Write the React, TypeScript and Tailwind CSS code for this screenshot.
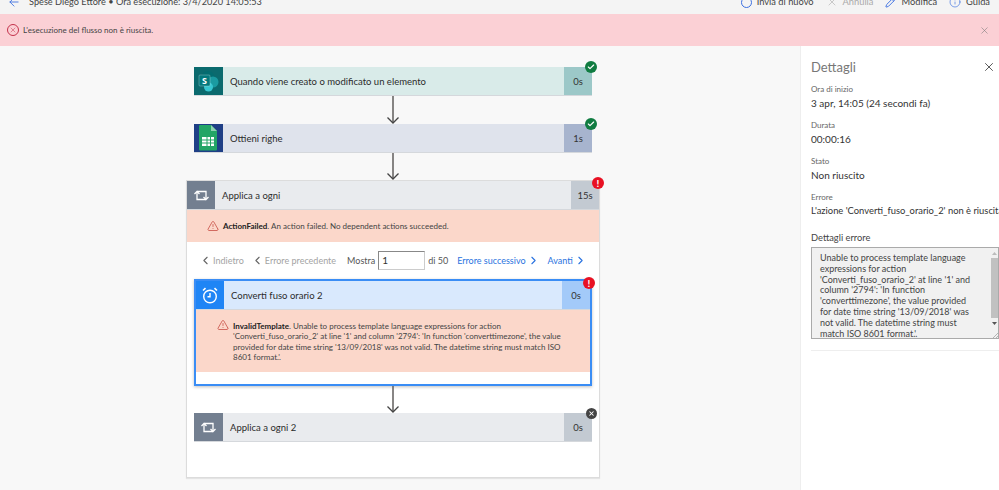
import React from 'react';
import { ArrowLeft, X, Pencil, Info, ChevronLeft, ChevronRight, AlertTriangle, Check } from 'lucide-react';

const SharePointIcon = () => (
  <svg width="22" height="22" viewBox="0 0 22 22">
    <circle cx="10" cy="7.5" r="6.5" fill="#036c70" />
    <circle cx="15" cy="12" r="5.5" fill="#1a9ba1" />
    <circle cx="10.5" cy="17" r="4.5" fill="#37c6d0" />
    <rect x="1" y="5" width="11" height="11" rx="1" fill="#03787c" stroke="#e5f3f3" strokeWidth="0.3" />
    <text x="6.5" y="13.5" textAnchor="middle" fontSize="9" fontWeight="700" fill="#fff" fontFamily="'Open Sans', sans-serif">S</text>
  </svg>
);

const SheetsIcon = () => (
  <svg width="19" height="26" viewBox="0 0 19 26">
    <path d="M1 0h11l6 6v18.5a1 1 0 0 1-1 1H1a1 1 0 0 1-1-1V1a1 1 0 0 1 1-1z" fill="#23a566" />
    <path d="M12 0l6 6h-6z" fill="#8ed1b1" />
    <path d="M3 12h12v9H3z" fill="#fff" />
    <path d="M3 15h12M3 18h12M8 12v9M11.500 12v9" stroke="#23a566" strokeWidth="1" />
  </svg>
);

// loop with a small arrow on each side, as on the "apply to each" tile
const LoopIcon = () => (
  <svg width="15" height="13" viewBox="0 0 15 13" fill="none" stroke="#fff" strokeWidth="1.300">
    <path d="M3 3v7.500h9" />
    <path d="M12 10V2.500H3" />
    <path d="M0.500 5L3 2.500L5.500 5" />
    <path d="M9.500 8L12 10.500L14.500 8" />
  </svg>
);

const ClockIcon = () => (
  <svg width="16" height="17" viewBox="0 0 16 17" fill="none" stroke="#fff" strokeWidth="1.400">
    <circle cx="8" cy="9.500" r="6.300" />
    <path d="M8 6v3.800H5.500" />
    <path d="M1 3.500L3.500 1.200M15 3.500L12.500 1.200" strokeWidth="1.600" />
  </svg>
);

const Arrow = ({ height }: { height: number }) => (
  <svg width="14" height={height} viewBox={`0 0 14 ${height}`} className="shrink-0">
    <path d={`M7 0V${height - 1}`} stroke="#605e5c" strokeWidth="1.5" />
    <path d={`M1.500 ${height - 6.5}L7 ${height - 1}L12.500 ${height - 6.5}`} stroke="#444" strokeWidth="1.300" fill="none" />
  </svg>
);

const OkBadge = () => (
  <span className="absolute -right-[5px] -top-[6px] flex h-[12px] w-[12px] items-center justify-center rounded-full bg-[#107c41] text-white">
    <Check size={8} strokeWidth={3.500} />
  </span>
);

const FailBadge = () => (
  <span className="absolute -right-[5px] -top-[4px] flex h-[12px] w-[12px] items-center justify-center rounded-full bg-[#e81123] text-[10px] leading-none font-bold text-white">
    !
  </span>
);

const Detail = ({ label, value, valueClass = 'text-[10px]' }: { label: string; value: string; valueClass?: string }) => (
  <div className="mb-[8px] whitespace-nowrap">
    <div className="text-[8px] leading-[14px] text-[#666]">{label}</div>
    <div className={`leading-[14px] text-[#333] ${valueClass}`}>{value}</div>
  </div>
);

const CardRow = ({ icon, iconBg, title, time, bg, timeBg, children }: {
  icon: React.ReactNode;
  iconBg: string;
  title: string;
  time: string;
  bg: string;
  timeBg: string;
  children?: React.ReactNode;
}) => (
  <div className={`relative flex h-[29px] w-full shrink-0 items-stretch border-b border-[#d5d8dc] ${bg}`}>
    <div className={`flex shrink-0 items-center justify-center ${iconBg}`}>{icon}</div>
    <div className="flex-1 truncate pl-[7px] text-[9.5px] leading-[29px] text-[#2b2b2b]">{title}</div>
    <div className={`w-[28px] shrink-0 text-center text-[9.5px] leading-[29px] text-[#333] ${timeBg}`}>{time}</div>
    {children}
  </div>
);

export default function App() {
  return (
    <div className="flex h-[490px] w-[999px] flex-col overflow-hidden bg-[#f8f8f8] font-['Lato',sans-serif]">
      <div className="flex h-[14px] shrink-0 items-start justify-between overflow-hidden bg-[#f4f4f4] leading-[14px] text-[#444]">
        <div className="-mt-[5px] flex items-center whitespace-nowrap pl-[7px] text-[9.2px]">
          <ArrowLeft size={14} className="text-[#3b6fe0]" strokeWidth={1.5} />
          <span className="ml-[8px]">Spese Diego Ettore • Ora esecuzione: 3/4/2020 14:05:53</span>
        </div>
        <div className="-mt-[5px] flex items-center gap-[12px] whitespace-nowrap pr-[9px] text-[9.3px]">
          <span className="flex items-center gap-[5px]"><span className="h-[11px] w-[11px] rounded-full border border-[#3b6fe0]" />Invia di nuovo</span>
          <span className="flex items-center gap-[5px] text-[#aaa]"><X size={12} strokeWidth={1.200} />Annulla</span>
          <span className="flex items-center gap-[5px]"><Pencil size={11} className="text-[#3b6fe0]" />Modifica</span>
          <span className="flex items-center gap-[5px]"><Info size={12} strokeWidth={1.300} className="text-[#3b6fe0]" />Guida</span>
        </div>
      </div>

      <div className="flex h-[32px] shrink-0 items-center bg-[#fbd0d5] pl-[7px] pr-[9px] text-[#444]">
        <span className="flex h-[12px] w-[12px] items-center justify-center rounded-full border border-[#c4314b] text-[#c4314b]">
          <X size={8} strokeWidth={1.500} />
        </span>
        <span className="ml-[4px] flex-1 text-[8px]">L'esecuzione del flusso non è riuscita.</span>
        <X size={11} strokeWidth={1.200} className="text-[#777]" />
      </div>

      <div className="flex min-h-0 flex-1">
        <main className="flex w-[800px] shrink-0 flex-col items-center pr-[14px] pt-[21px]">
          <div className="flex w-[398px] flex-col items-center">
            <CardRow title="Quando viene creato o modificato un elemento" time="0s" bg="bg-[#d9ebe9]" timeBg="bg-[#9cc8c8]" iconBg="w-[29px] bg-[#0b6a6e]" icon={<SharePointIcon />}>
              <OkBadge />
            </CardRow>
            <Arrow height={28} />
            <CardRow title="Ottieni righe" time="1s" bg="bg-[#dfe3ec]" timeBg="bg-[#a7b4ce]" iconBg="w-[29px] bg-[#1f3f86]" icon={<SheetsIcon />}>
              <OkBadge />
            </CardRow>
            <Arrow height={27} />
          </div>

          <div className="flex h-[298px] w-[414px] shrink-0 flex-col border border-[#dcdcdc] bg-white shadow-[0_1px_1px_rgba(0,0,0,0.08)]">
            <CardRow title="Applica a ogni" time="15s" bg="bg-[#e9ebee]" timeBg="bg-[#c3cad2]" iconBg="w-[28px] bg-[#737f90]" icon={<LoopIcon />}>
              <FailBadge />
            </CardRow>
            <div className="flex h-[32px] shrink-0 items-center bg-[#fbd7ca] pl-[20px] text-[8px] text-[#444]">
              <AlertTriangle size={12} className="text-[#c4453c]" strokeWidth={1.500} />
              <span className="ml-[4px]"><b className="text-[#222]">ActionFailed</b>. An action failed. No dependent actions succeeded.</span>
            </div>
            <div className="flex h-[37px] shrink-0 items-center whitespace-nowrap pl-[12px] text-[9px] text-[#a3a3a3]">
              <ChevronLeft size={13} strokeWidth={2} className="text-[#666]" />
              <span className="ml-[1px]">Indietro</span>
              <ChevronLeft size={13} strokeWidth={2} className="ml-[7px] text-[#666]" />
              <span className="ml-[1px]">Errore precedente</span>
              <span className="ml-[11px] text-[#555]">Mostra</span>
              <span className="ml-[3px] h-[19px] w-[47px] border border-[#ccc] border-l-[#888] border-t-[#888] pl-[3px] text-[10px] leading-[17px] text-[#333]">1</span>
              <span className="ml-[3px] text-[#555]">di 50</span>
              <span className="ml-[9px] text-[#2a73e0]">Errore successivo</span>
              <ChevronRight size={13} strokeWidth={2} className="ml-[1px] text-[#2a73e0]" />
              <span className="ml-[8px] text-[#2a73e0]">Avanti</span>
              <ChevronRight size={13} strokeWidth={2} className="ml-[1px] text-[#2a73e0]" />
            </div>

            <div className="flex flex-col items-center px-[7px]">
              <div className="w-[398px] shrink-0 border-2 border-[#3a8df5] bg-white shadow-[0_1px_3px_rgba(0,0,0,0.25)]">
                <CardRow title="Converti fuso orario 2" time="0s" bg="bg-[#d9e9fd]" timeBg="bg-[#a3caf9]" iconBg="w-[28px] bg-[#1f85f5]" icon={<ClockIcon />}>
                  <FailBadge />
                </CardRow>
                <div className="flex h-[62px] items-start bg-[#fbd7ca] pl-[21px] pr-[28px] pt-[11px] text-[8px] leading-[10.300px] text-[#444]">
                  <AlertTriangle size={12} className="mt-[-2px] shrink-0 text-[#c4453c]" strokeWidth={1.500} />
                  <p className="ml-[4px]"><b className="text-[#222]">InvalidTemplate</b>. Unable to process template language expressions for action 'Converti_fuso_orario_2' at line '1' and column '2794': 'In function 'converttimezone', the value provided for date time string '13/09/2018' was not valid. The datetime string must match ISO 8601 format.'.</p>
                </div>
                <div className="h-[12px]" />
              </div>
              <Arrow height={27} />
              <CardRow title="Applica a ogni 2" time="0s" bg="bg-[#e9ebee]" timeBg="bg-[#c3cad2]" iconBg="w-[29px] bg-[#737f90]" icon={<LoopIcon />}>
                <span className="absolute -right-[5px] -top-[5px] flex h-[11px] w-[11px] items-center justify-center rounded-full bg-[#444] text-white">
                  <X size={7} strokeWidth={3.500} />
                </span>
              </CardRow>
            </div>
          </div>
        </main>

        <aside className="relative flex-1 overflow-hidden border-l border-[#eee] bg-white pl-[10px] pt-[11px]">
          <div className="flex items-center justify-between pr-[3px]">
            <h2 className="text-[13px] leading-[20px] text-[#777]">Dettagli</h2>
            <X size={14} strokeWidth={1.500} className="text-[#444]" />
          </div>
          <div className="mt-[5px] w-[250px]">
            <Detail label="Ora di inizio" value="3 apr, 14:05 (24 secondi fa)" />
            <Detail label="Durata" value="00:00:16" />
            <Detail label="Stato" value="Non riuscito" />
            <Detail label="Errore" value="L'azione 'Converti_fuso_orario_2' non è riuscita" valueClass="text-[9.4px]" />
          </div>
          <div className="mt-[13px] text-[9.3px] leading-[14px] text-[#444]">Dettagli errore</div>
          <div className="relative mt-[2px] h-[92px] w-[188px] overflow-hidden border border-[#aaa] bg-[#f1f1f1] pl-[8px] pr-[23px] pt-[5px] text-[9px] leading-[10.800px] text-[#444]">
            Unable to process template language expressions for action 'Converti_fuso_orario_2' at line '1' and column '2794': 'In function 'converttimezone', the value provided for date time string '13/09/2018' was not valid. The datetime string must match ISO 8601 format.'.
            <div className="absolute right-0 top-0 flex h-full w-[7px] flex-col items-center bg-[#f1f1f1]">
              <svg width="5" height="3" viewBox="0 0 5 3" className="mt-[4px]"><path d="M2.500 0L5 3H0z" fill="#bbb" /></svg>
              <div className="mt-[3px] h-[60px] w-full bg-[#c1c1c1]" />
              <svg width="5" height="3" viewBox="0 0 5 3" className="mt-[4px]"><path d="M0 0h5L2.500 3z" fill="#555" /></svg>
              <svg width="6" height="6" viewBox="0 0 6 6" className="mt-auto" fill="none" stroke="#999" strokeWidth="0.700"><path d="M1 6L6 1M4 6L6 4" /></svg>
            </div>
          </div>
          <div className="mt-[11px] h-px w-[188px] bg-[#eee]" />
        </aside>
      </div>
    </div>
  );
}
